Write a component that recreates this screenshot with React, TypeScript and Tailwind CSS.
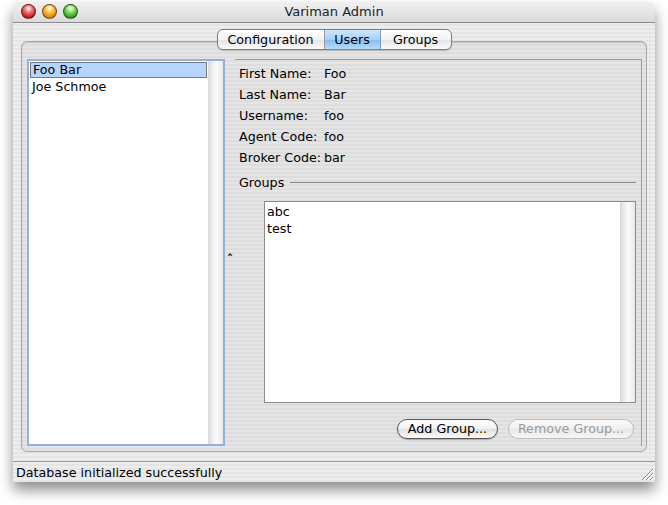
import React from "react";

const font = "font-['Lucida_Grande','DejaVu_Sans',sans-serif]";

const stripes =
  "bg-[repeating-linear-gradient(180deg,#ededed_0px,#ededed_2px,#e5e5e5_2px,#e5e5e5_4px)]";

function Light({ from, to }: { from: string; to: string }) {
  return (
    <div
      className="h-[15px] w-[15px] rounded-full border border-black/50"
      style={{
        background: `radial-gradient(circle at 50% 28%, #fff 0px, ${from} 4px, ${to} 10px)`,
      }}
    />
  );
}

function Field({ label, value }: { label: string; value: string }) {
  return (
    <div className="flex h-[21px] items-center">
      <span className="w-[85px]">{label}</span>
      <span>{value}</span>
    </div>
  );
}

function Track() {
  return (
    <div className="w-[15px] self-stretch bg-[linear-gradient(90deg,#d8d8d8,#f4f4f4_40%,#fafafa_60%,#e8e8e8)]" />
  );
}

export default function App() {
  return (
    <div className={`h-[505px] w-[668px] bg-white pl-[13px] pt-[2px] text-[12.7px] text-black ${font}`}>
      <div className={`flex h-[480px] w-[642px] flex-col rounded-t-[6px] shadow-[0_8px_14px_rgba(0,0,0,0.45)] ${stripes}`}>
        {/* title bar */}
        <div className="relative flex h-[21px] items-center rounded-t-[6px] border-b border-[#8a8a8a] bg-[linear-gradient(180deg,#f0f0f0,#dadada)] px-[8px]">
          <div className="relative z-10 flex gap-[6px]">
            <Light from="#f07070" to="#b00000" />
            <Light from="#ffc040" to="#d07000" />
            <Light from="#80e060" to="#208010" />
          </div>
          <div className="absolute inset-x-0 text-center text-[13px] text-[#222]">Variman Admin</div>
        </div>

        {/* tabs */}
        <div className="relative z-10 mt-[6px] flex justify-center">
          <div className="flex h-[21px] overflow-hidden rounded-[6px] border border-[#808080] bg-[linear-gradient(180deg,#ffffff,#f2f2f2_50%,#e4e4e4_51%,#fafafa)] shadow-[0_1px_1px_rgba(0,0,0,0.2)]">
            <div className="flex w-[107px] items-center justify-center border-r border-[#9a9a9a]">Configuration</div>
            <div className="flex w-[56px] items-center justify-center border-r border-[#7d9cc4] bg-[linear-gradient(180deg,#cfe6fc,#a6d0f7_50%,#80bcf2_51%,#b7dcfa)]">
              Users
            </div>
            <div className="flex w-[70px] items-center justify-center">Groups</div>
          </div>
        </div>

        {/* tab panel */}
        <div className="mx-[8px] -mt-[9px] flex h-[412px] rounded-[6px] border border-[#a8a8a8] bg-black/[0.03] pb-[5px] pl-[5px] pr-[4px] pt-[17px] shadow-[inset_0_1px_1px_rgba(0,0,0,0.15)]">
          {/* user list */}
          <div className="flex w-[198px] border-2 border-[#8fb3de] bg-white">
            <div className="flex-1 pt-px">
              <div className="mx-px flex h-[16px] items-center border border-[#7a7a7a] bg-[#b5d5ff] pl-[2px]">Foo Bar</div>
              <div className="flex h-[17px] items-center pl-[3px]">Joe Schmoe</div>
            </div>
            <Track />
          </div>

          {/* divider */}
          <div className="flex w-[10px] items-center justify-center pt-[14px] text-[12px] font-bold leading-none">ˆ</div>

          {/* detail pane */}
          <div className="flex flex-1 flex-col border-r border-t border-[#9a9a9a] pl-[4px] pr-[5px] pt-[3px]">
            <Field label="First Name:" value="Foo" />
            <Field label="Last Name:" value="Bar" />
            <Field label="Username:" value="foo" />
            <Field label="Agent Code:" value="foo" />
            <Field label="Broker Code:" value="bar" />

            <div className="mt-[5px] flex h-[20px] items-center gap-[6px]">
              <span>Groups</span>
              <div className="h-px flex-1 bg-[#888]" />
            </div>

            <div className="ml-[25px] mt-[8px] flex h-[202px] border border-[#8a8a8a] bg-white">
              <div className="flex-1 pl-[2px] pt-[1px]">
                <div className="flex h-[17px] items-center">abc</div>
                <div className="flex h-[17px] items-center">test</div>
              </div>
              <Track />
            </div>

            <div className="mt-[16px] flex justify-end gap-[10px] pr-[2px]">
              <div className="flex h-[20px] w-[101px] items-center justify-center rounded-full border border-[#555] bg-[linear-gradient(180deg,#ffffff,#f0f0f0_50%,#e0e0e0_51%,#fafafa)] shadow-[0_1px_1px_rgba(0,0,0,0.25)]">
                Add Group...
              </div>
              <div className="flex h-[20px] w-[126px] items-center justify-center rounded-full border border-[#bcbcbc] bg-[linear-gradient(180deg,#fafafa,#f0f0f0_50%,#e8e8e8_51%,#f6f6f6)] text-[#9a9a9a]">
                Remove Group...
              </div>
            </div>
          </div>
        </div>

        {/* status bar */}
        <div className="relative mt-[9px] flex h-[21px] items-center border-t border-[#9a9a9a] pl-[3px]">
          Database initialized successfully
          <svg className="absolute bottom-[1px] right-[1px]" width="14" height="14" viewBox="0 0 14 14">
            <path d="M13 2 L2 13 M13 6 L6 13 M13 10 L10 13" stroke="#888" strokeWidth="1" />
            <path d="M13 3 L3 13 M13 7 L7 13 M13 11 L11 13" stroke="#fff" strokeWidth="1" />
          </svg>
        </div>
      </div>
    </div>
  );
}
